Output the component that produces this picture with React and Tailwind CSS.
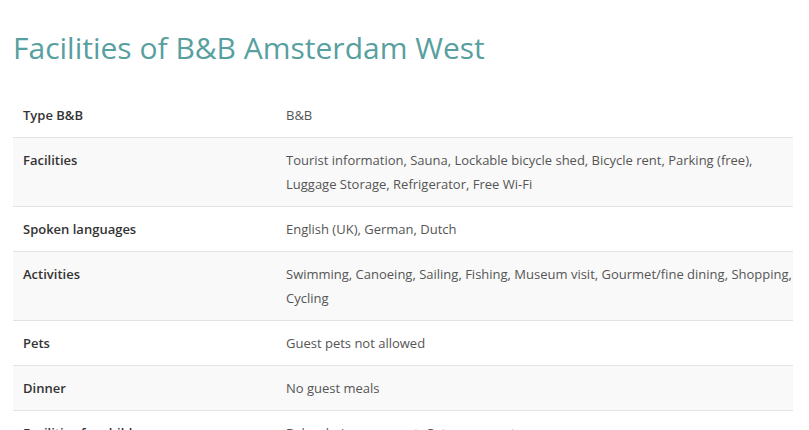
import React from "react";

const rows = [
  ["Type B&B", "B&B"],
  [
    "Facilities",
    "Tourist information, Sauna, Lockable bicycle shed, Bicycle rent, Parking (free), Luggage Storage, Refrigerator, Free Wi-Fi",
  ],
  ["Spoken languages", "English (UK), German, Dutch"],
  [
    "Activities",
    "Swimming, Canoeing, Sailing, Fishing, Museum visit, Gourmet/fine dining, Shopping, Cycling",
  ],
  ["Pets", "Guest pets not allowed"],
  ["Dinner", "No guest meals"],
  ["Facilities for children", "Baby chair on request, Cot on request"],
];

const App = () => {
  return (
    <div className="min-h-screen bg-white px-[13px] pt-[28px] font-['Open_Sans',sans-serif]">
      <h1 className="text-[30px] leading-[40px] font-normal text-[#58a0a0]">
        Facilities of B&amp;B Amsterdam West
      </h1>
      <div className="mt-[25px] w-[780px]">
        {rows.map(([label, value], i) => (
          <div
            key={label}
            className={`flex border-b border-[#e2e2e2] text-[13px] leading-[24px] ${
              i % 2 === 1 ? "bg-[#f9f9f9]" : "bg-white"
            }`}
          >
            <div className="w-[263px] shrink-0 px-[10px] py-[10px] font-semibold text-[#333]">
              {label}
            </div>
            <div className="flex-1 py-[10px] pl-[10px] pr-0 text-[#555]">{value}</div>
          </div>
        ))}
      </div>
    </div>
  );
};

export default App;
